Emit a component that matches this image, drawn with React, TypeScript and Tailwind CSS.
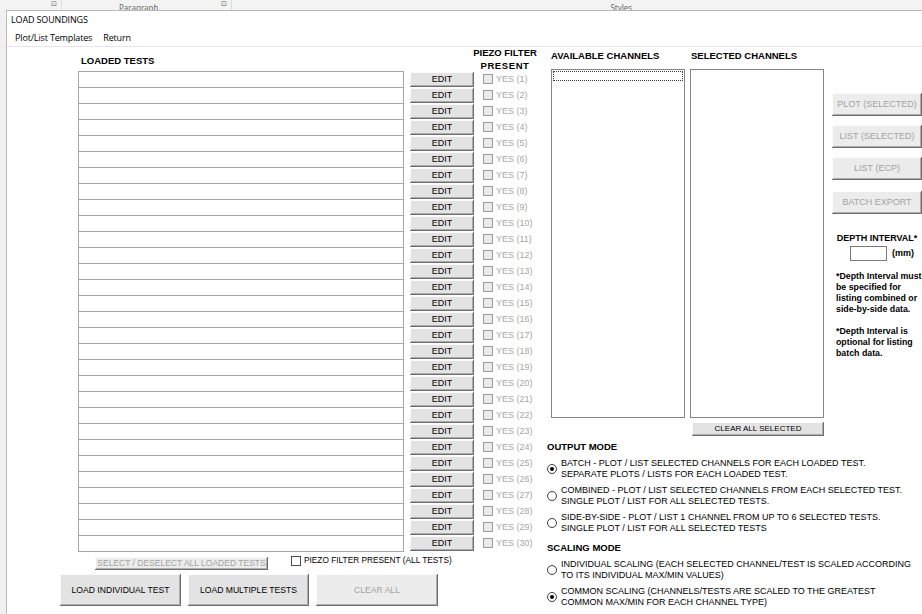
import { ReactNode } from 'react';

const tests = Array.from({ length: 30 }, (_, i) => i + 1);

// classic raised Win32 push button
const raised =
  'shadow-[inset_-1px_-1px_0_#6e6e6e,inset_1px_1px_0_#fbfbfb,inset_-2px_-2px_0_#adadad] bg-[#e3e3e3] flex items-center justify-center';

function PushButton({
  children,
  className = '',
  disabled = false,
}: {
  children: ReactNode;
  className?: string;
  disabled?: boolean;
}) {
  return (
    <div className={`${raised} ${disabled ? 'text-[#a3a3a3] bg-[#ececec]' : 'text-black'} ${className}`}>
      {children}
    </div>
  );
}

function CheckBox({ disabled = false }: { disabled?: boolean }) {
  return (
    <div
      className={`w-[10px] h-[10px] shrink-0 border ${
        disabled ? 'border-[#9c9c9c] bg-[#e9e9e9]' : 'border-[#4f4f4f] bg-white'
      }`}
    />
  );
}

function Radio({ checked, lines }: { checked?: boolean; lines: string[] }) {
  return (
    <div className="flex items-center gap-[4px]">
      <div className="w-[10px] h-[10px] rounded-full border border-[#3c3c3c] bg-white flex items-center justify-center shrink-0">
        {checked && <div className="w-[4px] h-[4px] rounded-full bg-black" />}
      </div>
      <div className="leading-[11px] text-[9px]">
        {lines.map((l) => (
          <div key={l}>{l}</div>
        ))}
      </div>
    </div>
  );
}

export default function App() {
  return (
    <div className="w-[922px] h-[614px] overflow-hidden bg-[#f0f0f0] flex flex-col font-['Liberation_Sans',Arial,sans-serif] text-[9px] text-black">
      {/* ribbon strip of the host app, cut off at the top */}
      <div className="h-[10px] shrink-0 bg-[#f3f3f3] overflow-hidden flex items-start text-[#6a6a6a] font-['Noto_Sans',sans-serif] text-[8px] leading-[10px]">
        <span className="ml-[51px] -mt-[1px] text-[7px]">⊡</span>
        <div className="ml-[4px] w-px h-[10px] bg-[#dcdcdc]" />
        <span className="ml-[57px] mt-[3px]">Paragraph</span>
        <span className="ml-[63px] -mt-[1px] text-[7px]">⊡</span>
        <div className="ml-[4px] w-px h-[10px] bg-[#dcdcdc]" />
        <span className="ml-[378px] mt-[3px]">Styles</span>
      </div>

      <div className="flex-1 flex">
        <div className="w-[6px] shrink-0" />
        <div className="flex-1 bg-white border-l border-t border-[#b8b8b8] flex flex-col">
          {/* window caption */}
          <div className="h-[18px] pl-[4px] flex items-center font-['Open_Sans',sans-serif] text-[9px] tracking-[-0.15px]">
            LOAD SOUNDINGS
          </div>
          {/* menu bar */}
          <div className="h-[18px] pl-[8px] flex items-center gap-[11px] border-b border-[#e6e6e6] font-['Open_Sans',sans-serif] text-[9px] tracking-[-0.15px]">
            <span>Plot/List Templates</span>
            <span>Return</span>
          </div>

          <div className="flex-1 flex whitespace-nowrap">
            {/* loaded tests */}
            <div className="ml-[53px] w-[487px] shrink-0 flex flex-col">
              <div className="h-[24px] flex items-end font-bold text-[9.5px]">
                <div className="w-[412px] pl-[21px] pb-[5px] leading-[11px]">LOADED TESTS</div>
                <div className="self-start w-[66px] text-center leading-[13px] -mt-[1px]">
                  <div>PIEZO FILTER</div>
                  <div className="tracking-[0.6px]">PRESENT</div>
                </div>
              </div>

              {tests.map((n) => (
                <div key={n} className="h-[16px] flex items-start">
                  <div
                    className={`ml-[18px] w-[326px] h-[16px] border-x border-t border-[#a6a6a6] ${
                      n === 30 ? 'h-[17px] border-b' : ''
                    }`}
                  />
                  <PushButton className="ml-[6px] mt-[1px] w-[64px] h-[15px]">EDIT</PushButton>
                  <div className="ml-[9px] mt-[3px] flex items-center gap-[3px] text-[#a6a6a6]">
                    <CheckBox disabled />
                    <span className="leading-[10px]">YES ({n})</span>
                  </div>
                </div>
              ))}

              <div className="mt-[6px] flex items-center">
                <PushButton disabled className="ml-[35px] w-[173px] h-[13px] text-[8.5px]">
                  SELECT / DESELECT ALL LOADED TESTS
                </PushButton>
                <div className="ml-[23px] -mt-[6px] flex items-center gap-[3px]">
                  <CheckBox />
                  <span className="text-[8.3px]">PIEZO FILTER PRESENT (ALL TESTS)</span>
                </div>
              </div>

              <div className="mt-[4px] flex gap-[7px] text-[8.6px]">
                <PushButton className="w-[121px] h-[32px]">LOAD INDIVIDUAL TEST</PushButton>
                <PushButton className="w-[121px] h-[32px]">LOAD MULTIPLE TESTS</PushButton>
                <PushButton disabled className="w-[122px] h-[32px]">
                  CLEAR ALL
                </PushButton>
              </div>
            </div>

            {/* channel lists and modes */}
            <div className="w-[285px] shrink-0 flex flex-col">
              <div className="h-[22px] flex font-bold text-[9.5px] leading-[11px] pt-[3px]">
                <div className="ml-[4px] w-[140px]">AVAILABLE CHANNELS</div>
                <div>SELECTED CHANNELS</div>
              </div>
              <div className="ml-[4px] flex gap-[5px]">
                <div className="w-[134px] h-[349px] border border-[#858585] p-px">
                  <div className="h-[10px] border border-dotted border-[#3a3a3a]" />
                </div>
                <div className="w-[134px] h-[349px] border border-[#858585]" />
              </div>
              <PushButton className="ml-[145px] mt-[4px] w-[132px] h-[14px] text-[8px]">CLEAR ALL SELECTED</PushButton>

              <div className="mt-[5px] font-bold text-[9.5px] leading-[11px]">OUTPUT MODE</div>
              <div className="mt-[6px] flex flex-col gap-[5px]">
                <Radio
                  checked
                  lines={[
                    'BATCH - PLOT / LIST SELECTED CHANNELS FOR EACH LOADED TEST.',
                    'SEPARATE PLOTS / LISTS FOR EACH LOADED TEST.',
                  ]}
                />
                <Radio
                  lines={[
                    'COMBINED - PLOT / LIST SELECTED CHANNELS FROM EACH SELECTED TEST.',
                    'SINGLE PLOT / LIST FOR ALL SELECTED TESTS.',
                  ]}
                />
                <Radio
                  lines={[
                    'SIDE-BY-SIDE - PLOT / LIST 1 CHANNEL FROM UP TO 6 SELECTED TESTS.',
                    'SINGLE PLOT / LIST FOR ALL SELECTED TESTS',
                  ]}
                />
              </div>
              <div className="mt-[8px] font-bold text-[9.5px] leading-[11px]">SCALING MODE</div>
              <div className="mt-[6px] flex flex-col gap-[5px]">
                <Radio
                  lines={[
                    'INDIVIDUAL SCALING (EACH SELECTED CHANNEL/TEST IS SCALED ACCORDING',
                    'TO ITS INDIVIDUAL MAX/MIN VALUES)',
                  ]}
                />
                <Radio
                  checked
                  lines={[
                    'COMMON SCALING (CHANNELS/TESTS ARE SCALED TO THE GREATEST',
                    'COMMON MAX/MIN FOR EACH CHANNEL TYPE)',
                  ]}
                />
              </div>
            </div>

            {/* actions */}
            <div className="flex-1 flex flex-col">
              <PushButton disabled className="mt-[46px] h-[23px]">PLOT (SELECTED)</PushButton>
              <PushButton disabled className="mt-[9px] h-[23px]">LIST (SELECTED)</PushButton>
              <PushButton disabled className="mt-[9px] h-[23px]">LIST (ECP)</PushButton>
              <PushButton disabled className="mt-[11px] h-[23px]">BATCH EXPORT</PushButton>

              <div className="mt-[19px] text-center font-bold leading-[11px]">DEPTH INTERVAL*</div>
              <div className="mt-[2px] flex items-center">
                <div className="ml-[18px] w-[37px] h-[15px] border border-[#7a7a7a]" />
                <span className="ml-[5px] font-bold">(mm)</span>
              </div>
              <div className="mt-[10px] ml-[4px] font-bold leading-[11px] text-[8.8px]">
                <div>*Depth Interval must</div>
                <div>be specified for</div>
                <div>listing combined or</div>
                <div>side-by-side data.</div>
                <div className="mt-[11px]">*Depth Interval is</div>
                <div>optional for listing</div>
                <div>batch data.</div>
              </div>
            </div>
          </div>
        </div>
      </div>
    </div>
  );
}
